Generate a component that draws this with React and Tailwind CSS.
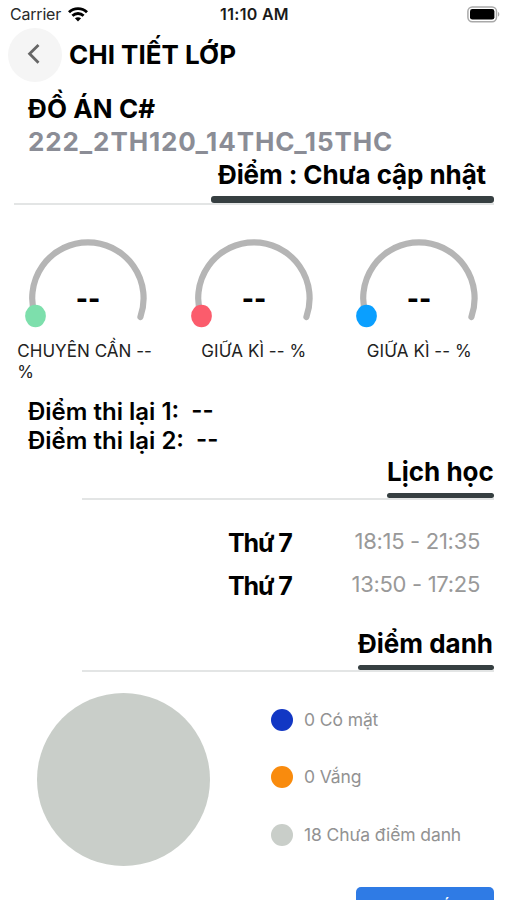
import clsx from "clsx";

const gauges = [
  { id: "attendance", label: "CHUYÊN CẦN -- %", color: "#7ddfac", align: "text-left" },
  { id: "midterm-1", label: "GIỮA KÌ -- %", color: "#fb5c6c", align: "text-center" },
  { id: "midterm-2", label: "GIỮA KÌ -- %", color: "#0a9fff", align: "text-center" },
];

const schedule = [
  { day: "Thứ 7", time: "18:15 - 21:35" },
  { day: "Thứ 7", time: "13:50 - 17:25" },
];

const legend = [
  { label: "0 Có mặt", dot: "bg-[#1237c4]" },
  { label: "0 Vắng", dot: "bg-[#f98b0d]" },
  { label: "18 Chưa điểm danh", dot: "bg-[#c9cec9]" },
];

function StatusBar() {
  return (
    <div className="flex h-7 items-center justify-between pl-[10px] pr-[7px] text-[16px] leading-7">
      <div className="flex w-40 items-center gap-[7px] text-[#2a2a2a]">
        <span className="tracking-[-0.2px]">Carrier</span>
        <svg width="20" height="15" viewBox="0 0 20 15" fill="none" stroke="#000" strokeWidth="2.9">
          <path d="M1 5.2C6 0.4 14 0.4 19 5.2" />
          <path d="M4.4 8.7C7.6 5.8 12.4 5.8 15.6 8.7" />
          <path d="M10 14.4L6.9 11.3C8.6 9.8 11.4 9.8 13.1 11.3Z" fill="#000" stroke="none" />
        </svg>
      </div>
      <span className="mr-px font-semibold tracking-[0.3px] text-[#1a1a1a]">11:10 AM</span>
      <div className="flex w-40 justify-end">
        <svg width="33" height="17" viewBox="0 0 33 17">
          <rect x="0.9" y="0.9" width="28.6" height="14.8" rx="4.4" fill="#fff" stroke="#a9a9a9" strokeWidth="1.5" />
          <rect x="3" y="3" width="24.4" height="10.6" rx="2.4" fill="#000" />
          <path d="M31 6v4.6c1.8-.7 1.8-3.9 0-4.6z" fill="#a9a9a9" />
        </svg>
      </div>
    </div>
  );
}

function Gauge({ label, color, align }) {
  return (
    <div className="flex w-[165.5px] flex-col items-center">
      <svg width="130" height="96" viewBox="0 0 130 96" fill="none">
        <path
          d="M12.4 85A55.7 56 0 1 1 117.4 85"
          stroke="#b5b5b5"
          strokeWidth="6.2"
          strokeLinecap="round"
        />
        <ellipse cx="12.5" cy="84" rx="10.4" ry="11.3" fill={color} />
        <text x="65" y="75.5" textAnchor="middle" fontSize="26" fontWeight="800" fill="#000">
          --
        </text>
      </svg>
      <p className={clsx("mt-[13px] w-[142px] text-[17px] leading-[21px] tracking-[0.05px] text-[#222]", align)}>
        {label}
      </p>
    </div>
  );
}

function SectionTitle({ title, className }) {
  return (
    <div className="ml-[82px] mr-[13px] border-b-2 border-[#e3e5e5]">
      <div className={clsx("ml-auto w-fit", className)}>
        <h2 className="whitespace-nowrap pt-px text-[26px] font-bold leading-8">{title}</h2>
        <div className="mt-[5px] h-[5px] rounded-sm bg-[#363f41]"></div>
      </div>
    </div>
  );
}

export default function App() {
  return (
    <div className="h-[900px] w-[507px] overflow-hidden bg-white font-['Inter','Liberation_Sans',sans-serif] text-black">
      <StatusBar />

      {/* Header */}
      <header className="flex h-[54px] items-center gap-[7px] pl-2">
        <button className="flex size-[54px] items-center justify-center rounded-full bg-[#f5f5f5] pb-[2px] pr-[2px]">
          <svg width="14" height="22" viewBox="0 0 14 22" fill="none" stroke="#666" strokeWidth="2.8">
            <path d="M11.5 2L2.6 10.8L11.5 19.8" />
          </svg>
        </button>
        <h1 className="pb-[2px] text-[26px] font-bold">CHI TIẾT LỚP</h1>
      </header>

      {/* Course info */}
      <section className="pt-[11px]">
        <div className="pl-[28px] text-[26px] font-bold leading-[32.5px]">
          <p className="tracking-[0.1px]">ĐỒ ÁN C#</p>
          <p className="tracking-[0.9px] text-[#8b8d96]">222_2TH120_14THC_15THC</p>
        </div>
        <div className="ml-[14px] mr-[13px] border-b-2 border-[#e3e5e5]">
          <div className="ml-auto w-[283px]">
            <h2 className="whitespace-nowrap pl-[7px] text-[26px] font-bold leading-[33px] tracking-[-0.1px]">
              Điểm : Chưa cập nhật
            </h2>
            <div className="mt-[5px] h-[7px] rounded-[3px] bg-[#363f41]"></div>
          </div>
        </div>
      </section>

      <section className="flex h-[192px] pl-[5.5px] pt-[27px]">
        {gauges.map(({ id, ...gauge }) => (
          <Gauge key={id} {...gauge} />
        ))}
      </section>

      <section className="pl-[28px] text-[24px] font-semibold leading-[29px]">
        <p className="whitespace-pre">Điểm thi lại 1:  --</p>
        <p className="whitespace-pre">Điểm thi lại 2:  --</p>
      </section>

      {/* Schedule */}
      <section className="h-[172px]">
        <SectionTitle title="Lịch học" className="min-w-[107px]" />
        <div className="pr-[27px] pt-[21px]">
          {schedule.map((row) => (
            <div key={row.time} className="flex h-[43px] items-center justify-end">
              <span className="w-[122px] pt-[2px] text-[25px] font-bold tracking-[-1.1px]">{row.day}</span>
              <span className="w-[130px] whitespace-nowrap pb-[2px] text-right text-[22px] tracking-[-0.3px] text-[#999]">
                {row.time}
              </span>
            </div>
          ))}
        </div>
      </section>

      {/* Attendance */}
      <section>
        <SectionTitle title="Điểm danh" className="min-w-[136px]" />
        <div className="flex pl-[37px] pt-[21px]">
          <div className="size-[173px] rounded-full bg-[#c9cec9]"></div>
          <ul className="ml-[61px] mt-[-2px]">
            {legend.map((item) => (
              <li key={item.label} className="flex h-[57.5px] items-center gap-[11px] text-[17.5px] tracking-[-0.1px] text-[#929292]">
                <span className={clsx("size-[22px] rounded-full", item.dot)}></span>
                {item.label}
              </li>
            ))}
          </ul>
        </div>
        <button className="ml-[356px] mt-[21px] flex h-[40px] w-[138px] items-center justify-center rounded-[5px] bg-[#2f7be5] text-[18px] font-semibold text-white">
          Chi tiết
        </button>
      </section>
    </div>
  );
}
